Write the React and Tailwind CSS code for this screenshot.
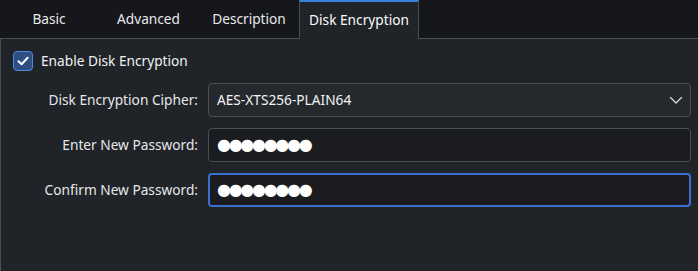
import React from "react";

function Tab({ label, active, w }) {
  if (active) {
    return (
      <div className={`${w} h-[39px] -mb-px bg-[#202328] border-t-2 border-t-[#3d7fe0] border-x border-x-[#4a4d52] flex items-center justify-center text-[#fcfcfc]`}>
        {label}
      </div>
    );
  }
  return (
    <div className={`${w} h-[38px] flex items-center justify-center text-[#e8e9ea]`}>
      {label}
    </div>
  );
}

function Row({ label, children }) {
  return (
    <div className="flex items-center h-[34px]">
      <div className="w-[198px] text-right pr-[1px] text-[#e6e7e8]">{label}</div>
      <div className="ml-[9px] w-[483px] h-full">{children}</div>
    </div>
  );
}

export default function App() {
  const dots = "●●●●●●●●";
  return (
    <div
      className="w-[698px] h-[271px] bg-[#15171a] flex flex-col text-[13.7px] text-[#fcfcfc] overflow-hidden"
      style={{ fontFamily: '"Noto Sans", "Open Sans", sans-serif' }}
    >
      <div className="flex h-[38px] shrink-0 relative z-10">
        <Tab label="Basic" w="w-[98px]" />
        <Tab label="Advanced" w="w-[101px]" />
        <Tab label="Description" w="w-[100px]" />
        <Tab label="Disk Encryption" w="w-[120px]" active />
      </div>
      <div className="flex-1 bg-[#202328] border-t border-l border-[#4a4d52] flex flex-col">
        <div className="flex items-center mt-[12px] ml-[12px] h-[20px]">
          <div className="w-[20px] h-[20px] rounded-[4px] bg-[#2d4f86] border border-[#4d8ae0] flex items-center justify-center">
            <svg width="14" height="14" viewBox="0 0 14 14" fill="none">
              <path d="M2.5 7.2 L5.6 10.2 L11.6 3.8" stroke="#ffffff" strokeWidth="2" strokeLinecap="round" strokeLinejoin="round" />
            </svg>
          </div>
          <span className="ml-[8px] text-[#f0f1f2]">Enable Disk Encryption</span>
        </div>
        <div className="flex flex-col gap-[11px] mt-[12px]">
          <Row label="Disk Encryption Cipher:">
            <div className="h-full rounded-[4px] border border-[#4b4e53] bg-[#25282d] flex items-center pl-[8px] pr-[7px]">
              <span className="flex-1 text-[#f2f3f4]">AES-XTS256-PLAIN64</span>
              <svg width="14" height="14" viewBox="0 0 14 14" fill="none">
                <path d="M1.5 4.5 L7 10 L12.5 4.5" stroke="#e0e1e2" strokeWidth="1.2" strokeLinecap="round" strokeLinejoin="round" />
              </svg>
            </div>
          </Row>
          <Row label="Enter New Password:">
            <div className="h-full rounded-[4px] border border-[#4b4e53] bg-[#1a1c20] flex items-center pl-[8px]">
              <span className="text-[16px] tracking-[-2.3px] text-white leading-none" style={{ fontFamily: '"DejaVu Sans", sans-serif' }}>{dots}</span>
            </div>
          </Row>
          <Row label="Confirm New Password:">
            <div className="h-full rounded-[4px] border-2 border-[#3b6fd0] bg-[#1a1c20] flex items-center pl-[7px]">
              <span className="text-[16px] tracking-[-2.3px] text-white leading-none" style={{ fontFamily: '"DejaVu Sans", sans-serif' }}>{dots}</span>
            </div>
          </Row>
        </div>
      </div>
    </div>
  );
}
